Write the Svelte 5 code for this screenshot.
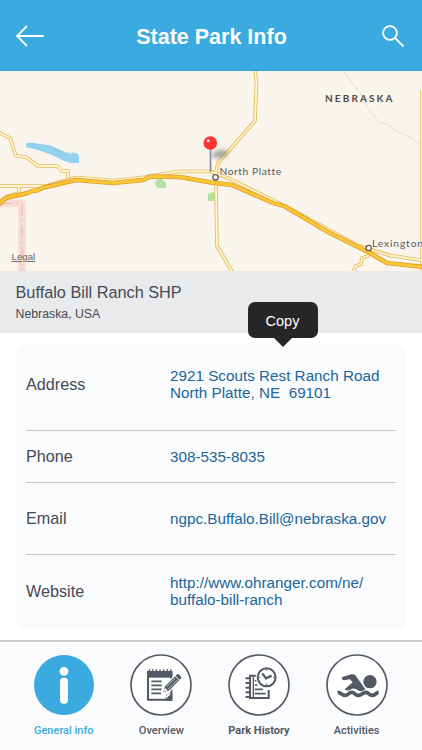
<script>
  const park = { name: "Buffalo Bill Ranch SHP", region: "Nebraska, USA" };

  const rows = [
    { label: "Address", lines: ["2921 Scouts Rest Ranch Road", "North Platte, NE\u00a0 69101"], height: 86 },
    { label: "Phone", lines: ["308-535-8035"], height: 52 },
    { label: "Email", lines: ["ngpc.Buffalo.Bill@nebraska.gov"], height: 72 },
    { label: "Website", lines: ["http://www.ohranger.com/ne/", "buffalo-bill-ranch"], height: 72 }
  ];

  const tabs = [
    { id: "info", label: "General info" },
    { id: "overview", label: "Overview" },
    { id: "history", label: "Park History" },
    { id: "activities", label: "Activities" }
  ];

  const minorRoads = [
    "M-2 132L10 138L16 156L26 157L38 166H57L62 171H68V178",
    "M-2 186H46L76 177.500L115 180.500L146 177L177 171.500H211L228 178L285 206L358 245.500L390 255.500L424 260.500",
    "M19 186V193L8 196L0 201",
    "M369 252L368 256L362 258L361 264L356 266L353 272",
    "M255 70L256.500 83L255 121L218 163L216 172V190L217 246L233 273",
    "M422 90V272"
  ];

  const highway =
    "M-2 205L6 198L28 193L32 191L37 190.500L42 188L76 180L113 183L143 180L150 176.500L180 177L211 182.500L232 185L273 203L285 206.500L328 232L368 252L387 263L424 267";

  let active = "info";
  let showCopy = true;
</script>

<div class="screen">
  <header>
    <svg class="back" viewBox="0 0 30 22" width="30" height="22">
      <path d="M11.500 1.500L2 11L11.500 20.500M2 11H28" />
    </svg>
    <h1>State Park Info</h1>
    <svg class="search" viewBox="0 0 24 24" width="24" height="24">
      <circle cx="9" cy="9" r="6.900" />
      <path d="M14 14L22 22" />
    </svg>
  </header>

  <svg class="map" viewBox="0 71 422 200" width="422" height="200">
    <defs>
      <filter id="soft" x="-50%" y="-50%" width="200%" height="200%">
        <feGaussianBlur stdDeviation="2" />
      </filter>
    </defs>

    <!-- county border -->
    <path d="M0 203.500H22V272" class="border-band" />
    <path d="M0 203.500H22V272" class="border-line" />

    <path
      d="M26 144L31 143L51 146L66 153L72 154L74 153L78 154L79 157V163H70L62 160L52 155L38 150L26 147Z"
      fill="#94d1ec"
    />
    <path d="M26 144L31 143L51 146L66 153L74 153L78 154" class="shore" />
    <path d="M155 182L158 179H162L166 183V188H158L155 185Z" fill="#b5e2a3" />
    <path d="M208 194L211 192.500H215V201H208Z" fill="#b5e2a3" />
    <path d="M344 72L354 85L362 95L368 109L380 123L388 124L396 131L411 138L422 145" class="county" />

    {#each minorRoads as d}
      <path {d} class="road-case" />
    {/each}
    {#each minorRoads as d}
      <path {d} class="road-fill" />
    {/each}
    <path d={highway} class="hw-case" />
    <path d={highway} class="hw-fill" />

    <circle cx="215.500" cy="177.300" r="2.700" class="town" />
    <circle cx="368.700" cy="248" r="2.700" class="town" />

    <text x="325" y="102" class="state" textLength="69">NEBRASKA</text>
    <text x="219.500" y="175.300" class="city" textLength="62">North Platte</text>
    <text x="372" y="246.500" class="city" textLength="51.500">Lexington</text>

    <!-- pin -->
    <ellipse cx="220" cy="154" rx="8" ry="3.500" fill="#555" opacity=".55" filter="url(#soft)" transform="rotate(-12 220 154)" />
    <path d="M210.500 148V172" stroke="#8c8c90" stroke-width="1.700" />
    <circle cx="210.300" cy="143" r="6.800" fill="#fb342d" />
    <circle cx="208.200" cy="140.800" r="1.500" fill="#ffd9d5" />

    <text x="11.500" y="260" class="legal">Legal</text>
  </svg>

  <section class="heading">
    <h2>{park.name}</h2>
    <p>{park.region}</p>
    {#if showCopy}
      <button class="copy" on:click={() => (showCopy = false)}>Copy</button>
    {/if}
  </section>

  <section class="card">
    {#each rows as row}
      <div class="row" style="height: {row.height}px">
        <span class="label">{row.label}</span>
        <span class="value">
          {#each row.lines as line}
            <span>{line}</span>
          {/each}
        </span>
      </div>
    {/each}
  </section>

  <nav>
    {#each tabs as tab}
      <button class="tab {tab.id}" class:active={active === tab.id} on:click={() => (active = tab.id)}>
        <svg viewBox="-93 -93 186 186" width="62" height="62">
          <circle r="90" class="ring" />
          {#if tab.id === "info"}
            <circle cy="-41" r="13" fill="#fff" />
            <rect x="-12" y="-22" width="24" height="78" rx="11" fill="#fff" />
          {:else if tab.id === "overview"}
            <path d="M-39 -39H31V44H-39Z" fill="none" stroke="#525965" stroke-width="6" />
            <path d="M-42 -41H34V-22H-42Z" />
            <path d="M-35 -47V-36M-25 -47V-36M-14 -47V-36M-3 -47V-36M8 -47V-36M19 -47V-36M29 -47V-36" stroke="#525965" stroke-width="4" />
            <path d="M-29 -11H2M-29 1H2M-29 13H2M-29 25H0" stroke="#525965" stroke-width="5" />
            <path d="M12 47L16 28L34 23V47Z" />
            <path d="M14 42L17 28L30 26Z" fill="#fff" />
            <path d="M4 25L10 3L46 -33Q51 -37 56 -32L62 -26Q65 -22 61 -18L26 18Z" stroke="#fff" stroke-width="4" />
            <path d="M16 6L43 -21M22 12L49 -15" stroke="#fff" stroke-width="2" />
            <path d="M41 -29L56 -14" stroke="#fff" stroke-width="3" />
            <path d="M8 20L12 9L20 16Z" fill="#fff" />
          {:else if tab.id === "history"}
            <path d="M-4 -28H-27V39H29V15" fill="none" stroke="#525965" stroke-width="6" />
            <path d="M-17 -28V39" stroke="#525965" stroke-width="4" />
            <path
              d="M-38 -20H-26M-38 -6H-26M-38 8H-26M-38 22H-26M-38 36H-26"
              stroke="#525965"
              stroke-width="6"
              stroke-linecap="round"
            />
            <path d="M-13 -13H-6M-13 0H-4M-13 13H12M-13 26H20" stroke="#525965" stroke-width="5" />
            <circle cx="23" cy="-23" r="33" fill="#fff" />
            <circle cx="23" cy="-23" r="27" fill="#fff" stroke="#525965" stroke-width="6" />
            <path d="M10 -35L21 -20L38 -28" fill="none" stroke="#525965" stroke-width="7" />
            <path d="M23 -47V-42M23 -4V1M-1 -23H4M42 -23H47" stroke="#525965" stroke-width="3" />
          {:else}
            <path d="M-44 -24Q-48 -18 -41 -14L-21 -17L-13 -8L-37 13Q-29 20 -20 14Q-9 6 2 15Q12 23 25 13L-5 -29Q-10 -34 -17 -32Z" />
            <circle cx="39" cy="-10" r="20" />
            <path
              d="M-58 23C-48 20 -46 33 -35 31C-24 29 -24 21 -15 22C-5 23 -4 33 6 31C16 30 17 22 27 22C36 23 37 32 47 31C56 30 57 23 65 22"
              fill="none"
              stroke="#525965"
              stroke-width="11"
            />
          {/if}
        </svg>
        <span>{tab.label}</span>
      </button>
    {/each}
  </nav>
</div>

<style>
  :global(body) {
    background: #fff;
  }

  .screen {
    width: 422px;
    height: 750px;
    display: flex;
    flex-direction: column;
    overflow: hidden;
    font-family: "Liberation Sans", Arial, sans-serif;
    color: #464a54;
  }

  header {
    height: 71px;
    flex: none;
    box-sizing: border-box;
    padding: 2px 17px 0 15px;
    display: flex;
    align-items: center;
    justify-content: space-between;
    background: #3baae1;
    border-bottom: 1px solid #359fd4;
  }

  h1 {
    margin: 1px 4px 0 1px;
    font-size: 21.5px;
    line-height: 26px;
    color: #fff;
  }

  header svg {
    fill: none;
    stroke: #fff;
    stroke-width: 1.8;
    stroke-linecap: round;
  }

  .map {
    display: block;
    flex: none;
    background: #f9f4ec;
  }

  .map path {
    stroke-linejoin: round;
  }

  .border-band { fill: none; stroke: #f8dbd3; stroke-width: 7.5; }
  .border-line { fill: none; stroke: #e6b5b1; stroke-width: 1; stroke-dasharray: 12 4 2 4; }
  .shore { fill: none; stroke: #7fbbd2; stroke-width: 1; stroke-dasharray: 1 1; }
  .county { fill: none; stroke: #e4e0d9; stroke-width: 1; }
  .road-case { fill: none; stroke: #e8bd59; stroke-width: 3.6; }
  .road-fill { fill: none; stroke: #fff5d3; stroke-width: 1.8; }
  .hw-case { fill: none; stroke: #dd9b35; stroke-width: 4.4; }
  .hw-fill { fill: none; stroke: #fdc733; stroke-width: 2.8; }
  .town { fill: #fff; stroke: #5d5a58; stroke-width: 1.3; }

  .state {
    font: 700 10px Lato, sans-serif;
    letter-spacing: 1.5px;
    fill: #4c4a4a;
  }

  .city {
    font: 400 10.3px Lato, sans-serif;
    font-variant-ligatures: none;
    letter-spacing: 0.4px;
    fill: #5d5a59;
    paint-order: stroke;
    stroke: #f9f4ec;
    stroke-width: 1.5px;
  }

  .legal {
    font-size: 9.7px;
    fill: #6e6864;
    text-decoration: underline;
  }

  .heading {
    position: relative;
    height: 62px;
    flex: none;
    box-sizing: border-box;
    padding: 12px 15.5px 0;
    background: #e9eaec;
  }

  h2 {
    margin: 0;
    font-size: 16.3px;
    line-height: 19px;
    font-weight: 400;
  }

  .heading p {
    margin: 5px 0 0;
    font-size: 12.3px;
    line-height: 15px;
  }

  /* popover over the address row */
  .copy {
    position: absolute;
    left: 248px;
    top: 31px;
    width: 70px;
    height: 36px;
    padding: 1px 1px 0 0;
    border: 0;
    border-radius: 7px;
    background: #262626;
    color: #fff;
    font: 14.5px "Liberation Sans", Arial, sans-serif;
  }

  .copy::after {
    content: "";
    position: absolute;
    left: 26px;
    top: 36px;
    border: 9px solid transparent;
    border-top-color: #262626;
    border-bottom: 0;
  }

  .card {
    margin: 11px 16px 10px;
    padding: 1px 10px 3px;
    flex: 1;
    box-sizing: border-box;
    border-radius: 9px;
    background: #fafbfd;
  }

  .row {
    display: flex;
    align-items: center;
    box-sizing: border-box;
    border-bottom: 1px solid #c6c9cc;
  }

  .row:first-child {
    padding-bottom: 7px;
  }

  .row:last-child {
    border-bottom: 0;
  }

  .label {
    width: 144px;
    flex: none;
    font-size: 16.2px;
    line-height: 19px;
  }

  .value {
    display: flex;
    flex-direction: column;
    font-size: 15.25px;
    line-height: 17px;
    color: #21659a;
    white-space: nowrap;
  }

  nav {
    height: 110px;
    flex: none;
    box-sizing: border-box;
    padding: 12px 16px 0 15px;
    display: grid;
    grid-template-columns: repeat(4, 97.6px);
    align-items: start;
    border-top: 2px solid #c9cacd;
    background: #f9fbfd;
  }

  .tab {
    padding: 0;
    border: 0;
    background: none;
    display: flex;
    flex-direction: column;
    align-items: center;
    gap: 8px;
    font: 500 11px/13px Roboto, sans-serif;
    color: #525965;
  }

  .tab svg {
    fill: #525965;
  }

  .ring {
    fill: #fff;
    stroke: #525965;
    stroke-width: 5;
  }

  .active {
    color: #3baae1;
  }

  .active .ring {
    fill: #3baae1;
    stroke: none;
  }

  .history span {
    font-weight: 700;
  }
</style>
